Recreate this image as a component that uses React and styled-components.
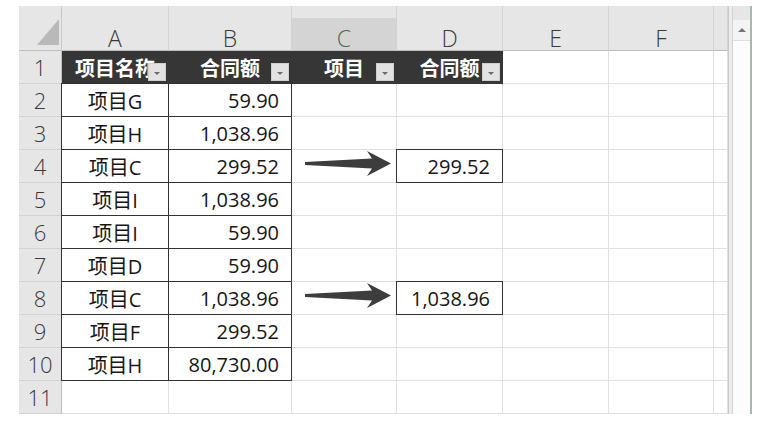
import React from 'react';
import styled, { createGlobalStyle, css } from 'styled-components';

const GlobalStyle = createGlobalStyle`
  body {
    margin: 0;
    background: #fff;
    font-family: "Open Sans", "Noto Sans CJK SC", sans-serif;
    color: #161616;
  }
`;

const Page = styled.div`
  padding: 6px 0 0 19px;
`;

const Frame = styled.div`
  display: flex;
  width: max-content;
  height: 408px;
`;

const Sheet = styled.div`
  display: grid;
  grid-template-columns: 43px 107px 123px 105px 106px 106px 105px 14px;
  grid-template-rows: 45px repeat(11, 33px);
  overflow: hidden;
`;

const Corner = styled.div`
  display: flex;
  justify-content: flex-end;
  align-items: flex-end;
  padding: 0 2px 5px 0;
  background: #e6e6e6;
  border-right: 1px solid #c9c9c9;
  border-bottom: 1px solid #bdbdbd;
`;

const Triangle = styled.div`
  width: 22px;
  height: 26px;
  background: #b9b9b9;
  clip-path: polygon(100% 0, 100% 100%, 0 100%);
`;

const ColHead = styled.div`
  display: flex;
  justify-content: center;
  align-items: center;
  padding-top: 20px;
  font-size: 23px;
  font-weight: 300;
  color: ${({ $selected }) => ($selected ? '#456b5a' : '#3a3a3a')};
  background: ${({ $selected }) =>
    $selected ? 'linear-gradient(#e6e6e6 12px, #d4d4d4 12px)' : '#e6e6e6'};
  border-right: 1px solid #d3d3d3;
  border-bottom: 1px solid #bdbdbd;
`;

const RowHead = styled.div`
  display: flex;
  justify-content: center;
  align-items: center;
  font-size: 22px;
  font-weight: 300;
  color: #3a3a3a;
  background: #e6e6e6;
  border-right: 1px solid #bdbdbd;
  border-bottom: 1px solid #d3d3d3;
`;

const Cell = styled.div`
  position: relative;
  display: flex;
  align-items: center;
  justify-content: ${({ $align }) => ($align === 'right' ? 'flex-end' : 'center')};
  padding-right: ${({ $align }) => ($align === 'right' ? '12px' : '0')};
  font-size: 20px;
  white-space: nowrap;
  background: #fff;
  border-right: 1px solid #e0e0e0;
  border-bottom: 1px solid #e0e0e0;

  ${({ $dark }) =>
    $dark &&
    css`
      background: #363636;
      color: #fff;
      font-family: "Noto Sans CJK SC", sans-serif;
      font-weight: 700;
      border-color: #363636;
      overflow: hidden;
    `}

  ${({ $boxed }) =>
    $boxed &&
    css`
      &::after {
        content: '';
        position: absolute;
        inset: -1px;
        border: 1px solid #333;
        pointer-events: none;
      }
    `}
`;

const ArrowCell = styled(Cell)`
  justify-content: flex-start;
  align-items: flex-start;
  padding: 0 0 0 12px;
`;

const FilterButton = styled.span`
  position: absolute;
  right: 2px;
  bottom: 2px;
  width: 18px;
  height: 18px;
  box-sizing: border-box;
  background: #e2e2e2;
  border: 1px solid #cfcfcf;
  display: flex;
  align-items: center;
  justify-content: center;

  &::before {
    content: '';
    margin-top: 3px;
    border-left: 3px solid transparent;
    border-right: 3px solid transparent;
    border-top: 3px solid #6a6a6a;
  }
`;

const Divider = styled.div`
  width: 3px;
  background: #ececec;
  border-left: 1px solid #c9c9c9;
  border-right: 1px solid #d3d3d3;
`;

const Scrollbar = styled.div`
  width: 17px;
  display: flex;
  flex-direction: column;
  background: #fcfcfc;
  border-right: 2px solid #a9b8af;
`;

const ScrollTop = styled.div`
  height: 14px;
  background: #e6e6e6;
`;

const ScrollButton = styled.div`
  height: 20px;
  display: flex;
  align-items: center;
  justify-content: center;
  background: #f4f4f4;
  border-bottom: 1px solid #dedede;

  &::before {
    content: '';
    border-left: 4px solid transparent;
    border-right: 4px solid transparent;
    border-bottom: 4px solid #777;
  }
`;

const Arrow = () => (
  <svg width="88" height="27" viewBox="0 0 88 27">
    <path d="M1 12 L68 8.5 L63 1 L87 13.5 L63 26 L68 18.5 L1 15 Z" fill="#3d3d3d" />
  </svg>
);

const columns = ['A', 'B', 'C', 'D', 'E', 'F', ''];

const data = [
  ['项目G', '59.90'],
  ['项目H', '1,038.96'],
  ['项目C', '299.52'],
  ['项目I', '1,038.96'],
  ['项目I', '59.90'],
  ['项目D', '59.90'],
  ['项目C', '1,038.96'],
  ['项目F', '299.52'],
  ['项目H', '80,730.00'],
];

// rows where a looked-up value sits in column D, with an arrow in C
const lookup = { 4: '299.52', 8: '1,038.96' };

export default function App() {
  return (
    <>
      <GlobalStyle />
      <Page>
        <Frame>
          <Sheet>
            <Corner>
              <Triangle />
            </Corner>
            {columns.map((c, i) => (
              <ColHead key={i} $selected={c === 'C'}>
                {c}
              </ColHead>
            ))}

            <RowHead>1</RowHead>
            <Cell $dark>
              项目名称
              <FilterButton />
            </Cell>
            <Cell $dark>
              合同额
              <FilterButton />
            </Cell>
            <Cell $dark>
              项目
              <FilterButton />
            </Cell>
            <Cell $dark>
              合同额
              <FilterButton />
            </Cell>
            <Cell />
            <Cell />
            <Cell />

            {data.map(([name, amount], i) => {
              const row = i + 2;
              return (
                <React.Fragment key={row}>
                  <RowHead>{row}</RowHead>
                  <Cell $boxed>{name}</Cell>
                  <Cell $boxed $align="right">
                    {amount}
                  </Cell>
                  {lookup[row] ? (
                    <ArrowCell>
                      <Arrow />
                    </ArrowCell>
                  ) : (
                    <Cell />
                  )}
                  {lookup[row] ? (
                    <Cell $boxed $align="right">
                      {lookup[row]}
                    </Cell>
                  ) : (
                    <Cell />
                  )}
                  <Cell />
                  <Cell />
                  <Cell />
                </React.Fragment>
              );
            })}

            <RowHead>11</RowHead>
            {columns.map((c, i) => (
              <Cell key={i} />
            ))}
          </Sheet>
          <Divider />
          <Scrollbar>
            <ScrollTop />
            <ScrollButton />
          </Scrollbar>
        </Frame>
      </Page>
    </>
  );
}
